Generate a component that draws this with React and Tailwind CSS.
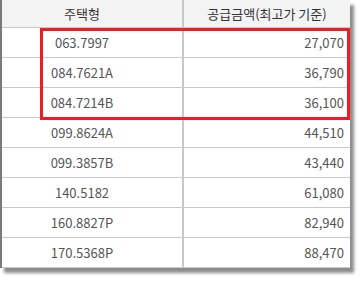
export default function App() {
  const rows = [
    ["063.7997", "27,070"],
    ["084.7621A", "36,790"],
    ["084.7214B", "36,100"],
    ["099.8624A", "44,510"],
    ["099.3857B", "43,440"],
    ["140.5182", "61,080"],
    ["160.8827P", "82,940"],
    ["170.5368P", "88,470"],
  ];
  return (
    <div className="w-[360px] h-[281px] bg-white relative overflow-hidden" style={{ fontFamily: '"Noto Sans CJK KR", "Noto Sans", sans-serif' }}>
      <div className="w-[350px] border-l-2 border-[#7a7a7a] bg-white shadow-[4px_5px_3px_rgba(0,0,0,0.45)] relative">
        <div className="flex h-[28px] bg-[#f3f3f3] border-b border-[#c8c8c8] text-[13px] text-[#333]">
          <div className="w-[182px] flex items-center justify-center pr-[20px] border-r-2 border-[#c8c8c8]">주택형</div>
          <div className="flex-1 flex items-center justify-center">공급금액(최고가 기준)</div>
        </div>
        {rows.map(([a, b], i) => (
          <div key={i} className="flex h-[30px] border-b border-[#c8c8c8] text-[13px] text-[#555] last:border-b-0">
            <div className="w-[182px] flex items-center justify-center pr-[20px] border-r-2 border-[#c8c8c8]">{a}</div>
            <div className="flex-1 flex items-center justify-end pr-[6px]">{b}</div>
          </div>
        ))}
        <div className="absolute left-[38px] top-[28px] w-[310px] h-[92px] border-[3px] border-[#ee1c25]"></div>
      </div>
    </div>
  );
}
